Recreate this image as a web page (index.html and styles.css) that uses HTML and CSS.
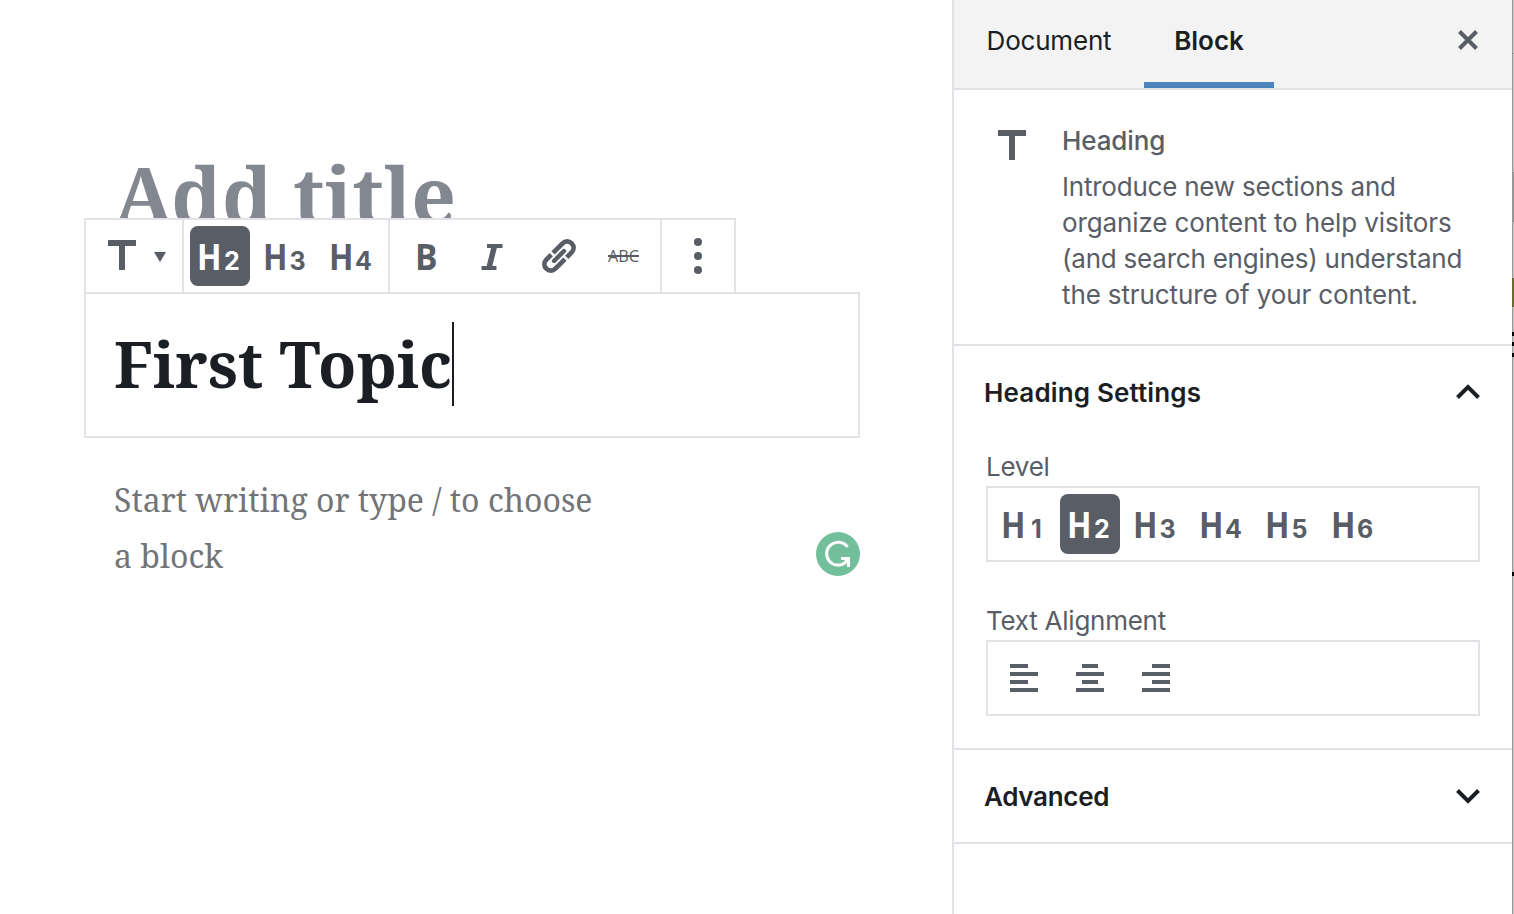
FILE: index.html
```
<!DOCTYPE html>
<html lang="en">
<head>
<meta charset="utf-8">
<title>Block editor</title>
<link rel="stylesheet" href="styles.css">
</head>
<body>
<div class="app">
  <main class="editor">
    <h1 class="post-title"><svg class="line" width="360" height="100"><text x="30" y="84" textLength="342" lengthAdjust="spacingAndGlyphs">Add title</text></svg></h1>
    <div class="toolbar">
      <div class="group switcher">
        <svg class="type-icon" viewBox="0 0 28 30"><path d="M0 3H28M14 3V30"/></svg>
        <svg class="caret-down" viewBox="0 0 12 10"><path d="M0 0H12L6 10Z"/></svg>
      </div>
      <div class="group levels">
        <button class="level active"><svg viewBox="0 0 60 60"><text class="h" x="7" y="44" textLength="24.500" lengthAdjust="spacingAndGlyphs">H</text><text class="n" x="34" y="44">2</text></svg></button>
        <button class="level"><svg viewBox="0 0 60 60"><text class="h" x="7" y="44" textLength="24.500" lengthAdjust="spacingAndGlyphs">H</text><text class="n" x="33.500" y="44">3</text></svg></button>
        <button class="level"><svg viewBox="0 0 60 60"><text class="h" x="7" y="44" textLength="24.500" lengthAdjust="spacingAndGlyphs">H</text><text class="n" x="33" y="44">4</text></svg></button>
      </div>
      <div class="group formats">
        <button class="level"><svg viewBox="0 0 60 60"><text class="h" x="19" y="44" textLength="22.500" lengthAdjust="spacingAndGlyphs">B</text></svg></button>
        <button class="level"><svg class="stroke" viewBox="0 0 60 60"><path d="M25 20H40.500M19.500 42H34.500" stroke-width="4"/><path d="M32.500 20L27 42" stroke-width="5.500"/></svg></button>
        <button class="level"><svg class="stroke" viewBox="0 0 60 60"><g transform="translate(31 30) rotate(-45)" stroke-width="4.800"><path d="M-2 -6.400H11.500A6.400 6.400 0 0 1 11.500 6.400H4.500"/><path d="M2 6.400H-11.500A6.400 6.400 0 0 1 -11.500 -6.400H-4.500"/><path d="M-7 0H7" stroke-width="4.400" stroke-linecap="round"/></g></svg></button>
        <button class="level"><svg viewBox="0 0 60 60"><text class="abc" x="14" y="36" textLength="31" lengthAdjust="spacingAndGlyphs">ABC</text><path d="M14 29H45V31H14Z"/></svg></button>
      </div>
      <div class="group more">
        <svg viewBox="0 0 8 36"><circle cx="4" cy="4" r="4"/><circle cx="4" cy="18" r="4"/><circle cx="4" cy="32" r="4"/></svg>
      </div>
    </div>
    <section class="heading-block">
      <svg class="line" width="344" height="84"><text x="0" y="66" textLength="338" lengthAdjust="spacingAndGlyphs">First Topic</text><path d="M338 0H340V84H338Z"/></svg>
    </section>
    <div class="prompt">
      <svg class="line" width="500" height="112"><text x="0" y="38" textLength="478.500" lengthAdjust="spacingAndGlyphs">Start writing or type / to choose</text><text x="0" y="94" textLength="109" lengthAdjust="spacingAndGlyphs">a block</text></svg>
      <svg class="grammar" viewBox="0 0 44 44"><circle cx="22" cy="22" r="22"/><path d="M31.500 15A11.500 11.500 0 1 0 29.500 30.500M25 26.500H32.500V35M32.500 26.500L28 31.500"/></svg>
    </div>
  </main>
  <aside class="sidebar">
    <header class="tabs">
      <button class="tab document">Document</button>
      <button class="tab block">Block</button>
      <svg class="close" viewBox="0 0 20 20"><path d="M1.500 1.500L18.500 18.500M18.500 1.500L1.500 18.500"/></svg>
    </header>
    <section class="card">
      <svg class="type-icon" viewBox="0 0 28 30"><path d="M0 3H28M14 3V30"/></svg>
      <div class="card-body">
        <h2>Heading</h2>
        <p>Introduce new sections and<br><span class="looser">organize content to help visitors</span><br>(and search engines) understand<br><span class="looser">the structure of your content.</span></p>
      </div>
    </section>
    <section class="settings">
      <div class="panel-title heading-title"><h2>Heading Settings</h2><svg class="chevron" viewBox="0 0 24 16"><path d="M1.500 13.500L12 3L22.500 13.500"/></svg></div>
      <p class="label level-label">Level</p>
      <div class="box">
        <button class="level"><svg viewBox="0 0 60 60"><text class="h" x="7" y="44" textLength="24.500" lengthAdjust="spacingAndGlyphs">H</text><text class="n" x="37" y="44">1</text></svg></button>
        <button class="level active"><svg viewBox="0 0 60 60"><text class="h" x="7" y="44" textLength="24.500" lengthAdjust="spacingAndGlyphs">H</text><text class="n" x="34" y="44">2</text></svg></button>
        <button class="level"><svg viewBox="0 0 60 60"><text class="h" x="7" y="44" textLength="24.500" lengthAdjust="spacingAndGlyphs">H</text><text class="n" x="33.500" y="44">3</text></svg></button>
        <button class="level"><svg viewBox="0 0 60 60"><text class="h" x="7" y="44" textLength="24.500" lengthAdjust="spacingAndGlyphs">H</text><text class="n" x="33" y="44">4</text></svg></button>
        <button class="level"><svg viewBox="0 0 60 60"><text class="h" x="7" y="44" textLength="24.500" lengthAdjust="spacingAndGlyphs">H</text><text class="n" x="33.500" y="44">5</text></svg></button>
        <button class="level"><svg viewBox="0 0 60 60"><text class="h" x="7" y="44" textLength="24.500" lengthAdjust="spacingAndGlyphs">H</text><text class="n" x="33" y="44">6</text></svg></button>
      </div>
      <p class="label align-label">Text Alignment</p>
      <div class="box">
        <button class="level"><svg class="stroke" viewBox="0 0 60 60"><path stroke-width="4" d="M16 18H34M16 26H44M16 34H34M16 42H44"/></svg></button>
        <button class="level"><svg class="stroke" viewBox="0 0 60 60"><path stroke-width="4" d="M22 18H38M16 26H44M22 34H38M16 42H44"/></svg></button>
        <button class="level"><svg class="stroke" viewBox="0 0 60 60"><path stroke-width="4" d="M26 18H44M16 26H44M26 34H44M16 42H44"/></svg></button>
      </div>
    </section>
    <section class="advanced panel-title"><h2>Advanced</h2><svg class="chevron" viewBox="0 0 24 16"><path d="M1.500 2.500L12 13L22.500 2.500"/></svg></section>
  </aside>
  <svg class="edge" viewBox="0 0 2 914"><path fill="#999" d="M0 0H1V914H0Z"/><path fill="#c8c8c8" d="M1 0H2V914H1Z"/><path fill="#929292" d="M1 53H2V54H1ZM1 172H2V222H1Z"/><path fill="#6a6b2f" d="M0 278H2V307H0Z"/><path fill="#000" d="M0 332H2V336H0ZM0 342H2V346H0ZM0 353H2V357H0ZM0 572H2V576H0Z"/></svg>
</div>
</body>
</html>
```
FILE: styles.css
```
* { box-sizing: border-box; }
body { margin: 0; background: #fff; color: #1b1e23; font-family: Inter, "Liberation Sans", sans-serif; overflow: hidden; }
h1, h2, p { margin: 0; }
button { border: 0; padding: 0; background: none; font: inherit; color: inherit; letter-spacing: inherit; }
svg { display: block; flex: none; overflow: visible; }
.app { display: flex; width: 1514px; height: 914px; overflow: hidden; }
.editor { width: 952px; flex: none; padding: 140px 92px 0 84px; }
.line { font-family: "Noto Serif", "Droid Serif", "DejaVu Serif Condensed", "DejaVu Serif", serif; }
.post-title { height: 78px; font-size: 78px; font-weight: 700; }
.post-title svg { fill: #838790; }
.toolbar { position: relative; display: flex; width: 652px; height: 76px; background: #fff; border: 2px solid #e2e2e7; color: #595d66; }
.group { display: flex; border-right: 2px solid #e2e2e7; }
.switcher { width: 98px; padding: 20px 0 0 22px; gap: 18px; }
.type-icon { width: 28px; height: 30px; stroke: #595d66; stroke-width: 6; fill: none; }
.caret-down { width: 12px; height: 10px; margin-top: 12px; fill: #595d66; }
.levels { width: 206px; padding: 6px; gap: 6px; }
.formats { width: 272px; padding: 6px; gap: 6px; }
.more { flex: 1; border: 0; justify-content: center; padding-top: 18px; }
.more svg { width: 8px; height: 36px; fill: #595d66; }
.level { width: 60px; height: 60px; flex: none; border-radius: 8px; color: #595d66; }
.level svg { width: 60px; height: 60px; fill: currentColor; }
.level .stroke { fill: none; stroke: currentColor; }
.active { background: #595d66; color: #fff; }
.h { font: 700 36px "Open Sans", "Noto Sans", sans-serif; }
.n { font: 700 25px Inter, sans-serif; }
.abc { font: 500 17px "Open Sans", "Noto Sans", sans-serif; }
.heading-block { height: 146px; margin-top: -2px; border: 2px solid #e2e2e7; padding: 28px; font-size: 64px; font-weight: 700; fill: #1b1e23; }
.prompt { display: flex; justify-content: space-between; padding: 36px 0 0 30px; font-size: 32px; fill: #727478; }
.grammar { width: 44px; height: 44px; margin-top: 58px; fill: #74bf9b; }
.grammar path { fill: none; stroke: #fff; stroke-width: 3; }
.sidebar { width: 560px; flex: none; border-left: 2px solid #e2e2e7; font-size: 26px; }
.tabs { height: 90px; display: flex; background: #f3f3f3; border-bottom: 2px solid #e2e2e7; }
.tab { height: 88px; padding-bottom: 8px; }
.document { width: 190px; letter-spacing: -0.2px; }
.block { width: 130px; font-weight: 600; border-bottom: 6px solid #4b84b8; padding: 0 0 2px; }
.close { width: 20px; height: 20px; margin: 30px 34px 0 auto; stroke: #595d66; stroke-width: 4; }
.card { display: flex; height: 256px; padding: 33px 0 0 44px; gap: 36px; color: #595d66; border-bottom: 2px solid #e2e2e7; }
.card .type-icon { margin-top: 7px; }
.card h2 { font-size: 26px; font-weight: 500; line-height: 36px; margin-bottom: 10px; letter-spacing: -0.1px; }
.card p { line-height: 36px; white-space: nowrap; letter-spacing: -0.22px; }
.looser { letter-spacing: -0.12px; }
.settings { height: 404px; padding: 0 32px; border-bottom: 2px solid #e2e2e7; }
.panel-title { display: flex; align-items: center; justify-content: space-between; height: 94px; }
.panel-title h2 { font-size: 26px; font-weight: 600; margin-left: -2px; letter-spacing: -0.3px; }
.panel-title.heading-title h2 { letter-spacing: 0.15px; }
.heading-title { height: 92px; }
.chevron { width: 24px; height: 16px; fill: none; stroke: #1b1e23; stroke-width: 4; }
.label { color: #595d66; line-height: 36px; letter-spacing: -0.25px; }
.level-label { height: 48px; padding-top: 11px; }
.align-label { height: 78px; padding-top: 41px; }
.box { display: flex; gap: 6px; height: 76px; border: 2px solid #e2e2e7; padding: 6px; }
.advanced { padding: 0 32px; height: 94px; border-bottom: 2px solid #e2e2e7; }
.edge { width: 2px; height: 914px; }
```
